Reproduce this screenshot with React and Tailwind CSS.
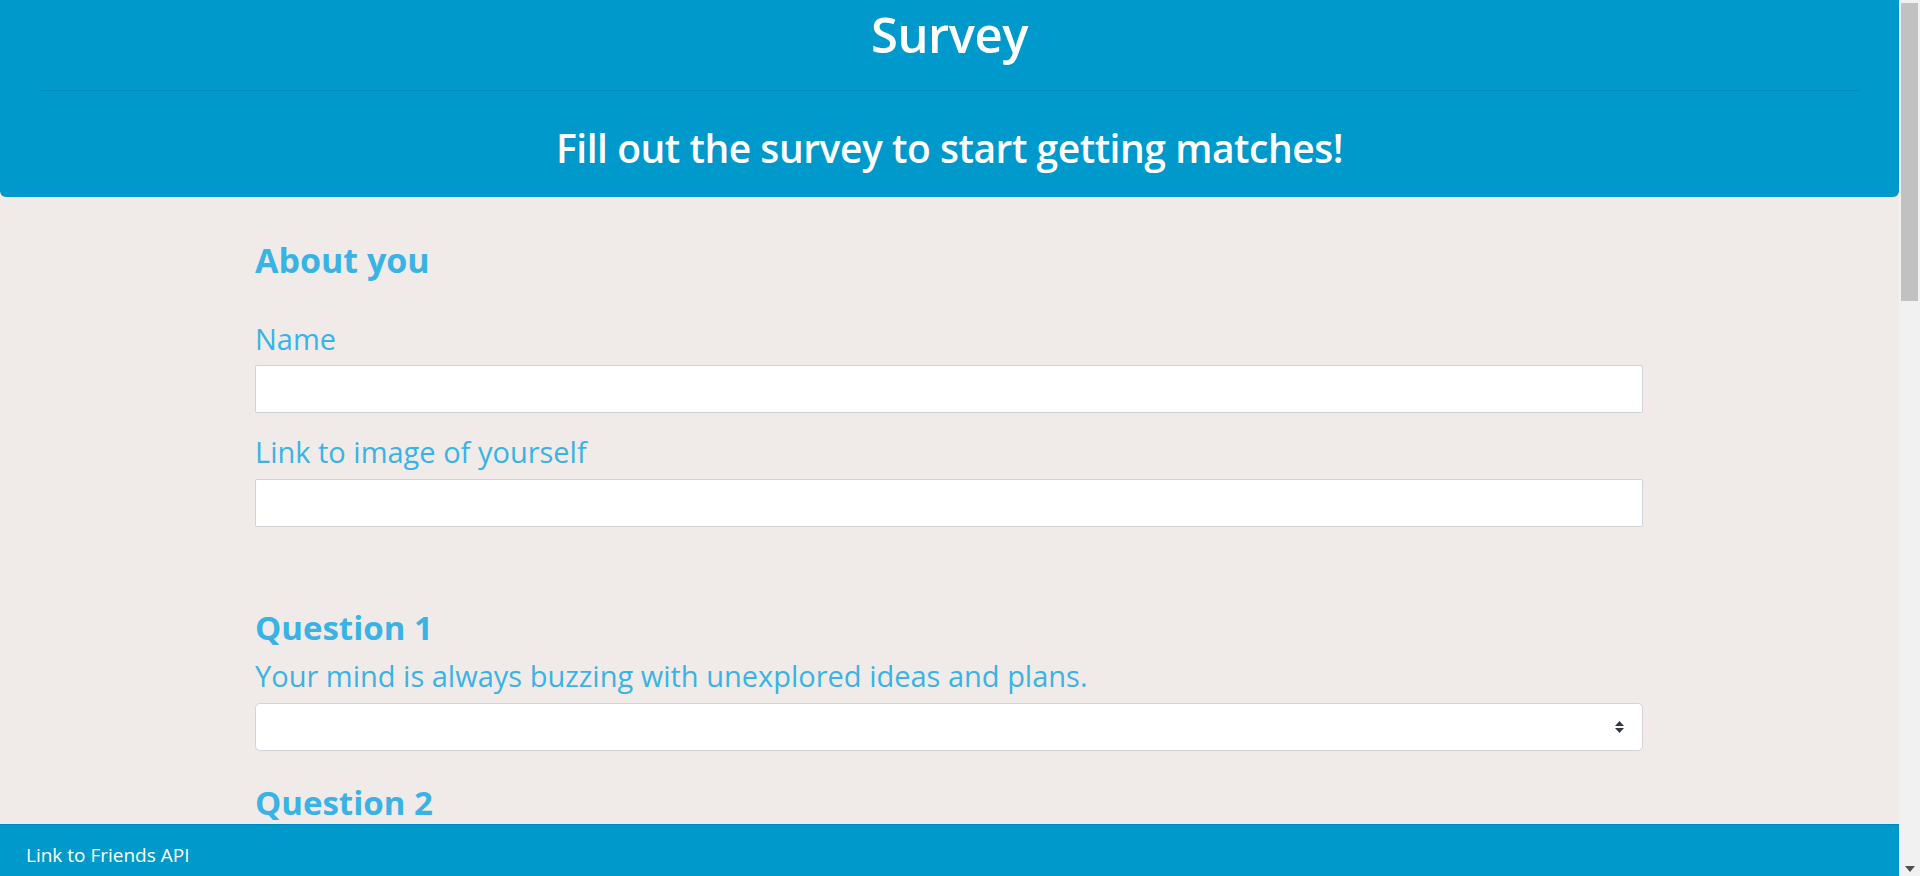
import React from 'react';

const font = { fontFamily: '"Open Sans", "Noto Sans", sans-serif' };

const Label = ({ children, className = '' }) => (
  <label className={`block text-[29px] leading-[36px] font-medium text-[#39b3e5] ${className}`}>{children}</label>
);

const TextInput = ({ className = '' }) => (
  <input
    type="text"
    className={`block w-full h-[48px] bg-white border border-[#ced4da] rounded-[2px] outline-none ${className}`}
  />
);

const Scrollbar = () => (
  <div className="w-[21px] h-full bg-[#f1f1f1] flex flex-col items-center">
    <div className="mt-[3px] w-[17px] h-[298px] bg-[#c1c1c1]" />
    <div className="flex-1" />
    <svg width="10" height="6" viewBox="0 0 10 6" className="mb-[4px]">
      <path d="M0 0h10L5 6z" fill="#505050" />
    </svg>
  </div>
);

export default function App() {
  return (
    <div className="flex w-full h-[876px] overflow-hidden bg-[#f0ebe8]" style={font}>
      <div className="flex-1 flex flex-col min-w-0">
        <header className="bg-[#0099cc] rounded-b-[6px] px-[40px] pt-[4px] pb-[25px] text-white text-center">
          <h1 className="text-[49px] leading-[60px] font-semibold tracking-[-0.01em]">Survey</h1>
          <hr className="mt-[26px] border-0 border-t border-[#008ab8]" />
          <h2 className="mt-[33px] text-[39px] leading-[48px] font-semibold tracking-[-0.012em]">
            Fill out the survey to start getting matches!
          </h2>
        </header>

        <main className="flex-1 overflow-hidden">
          <div className="ml-[255px] w-[1388px] flex flex-col">
            <h3 className="mt-[42px] text-[34px] leading-[42px] font-bold text-[#39b3e5]">About you</h3>
            <Label className="mt-[40px]">Name</Label>
            <TextInput className="mt-[8px]" />
            <Label className="mt-[21px]">Link to image of yourself</Label>
            <TextInput className="mt-[9px] h-[47px]" />

            <h3 className="mt-[80px] text-[33px] leading-[42px] font-bold text-[#39b3e5]">Question 1</h3>
            <Label className="mt-[9px]">Your mind is always buzzing with unexplored ideas and plans.</Label>
            <div className="mt-[9px] h-[48px] bg-white border border-[#d3d3db] rounded-[5px] flex items-center justify-end pr-[18px]">
              <svg width="9" height="12" viewBox="0 0 9 12">
                <path d="M4.5 0L9 5H0z M0 7h9l-4.5 5z" fill="#343a40" />
              </svg>
            </div>

            <h3 className="mt-[31px] text-[33px] leading-[42px] font-bold text-[#39b3e5]">Question 2</h3>
          </div>
        </main>

        <footer className="h-[52px] bg-[#0099cc] border-t border-[#0088b8] pl-[26px] pt-[18px]">
          <a href="#" className="block text-[19px] leading-[24px] text-white">Link to Friends API</a>
        </footer>
      </div>
      <Scrollbar />
    </div>
  );
}
